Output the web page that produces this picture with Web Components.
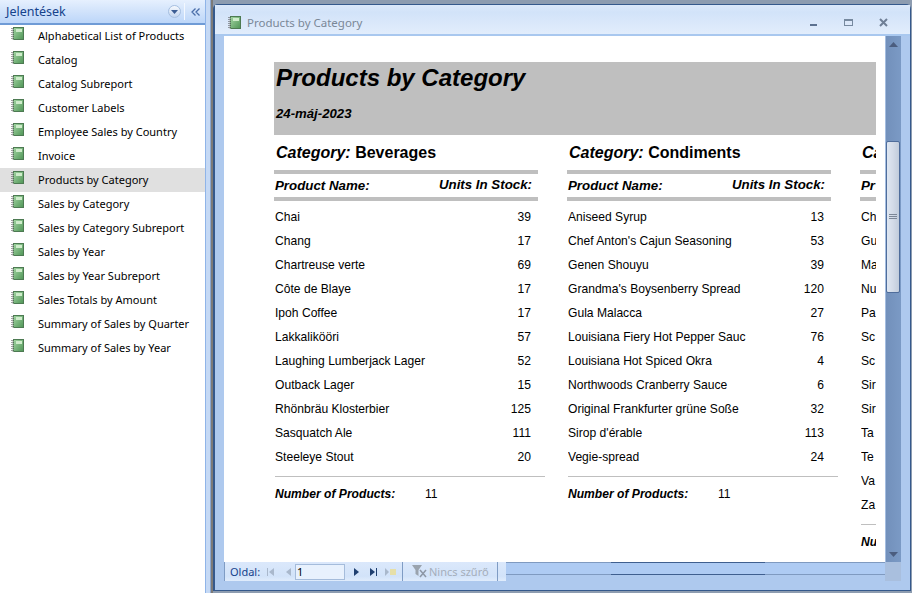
<!DOCTYPE html>
<html lang="hu">
<head>
<meta charset="utf-8">
<title>Products by Category</title>
<style>
  html, body { margin: 0; height: 100%; overflow: hidden; background: #aec9ee; }
</style>
</head>
<body>
<access-app>
  <nav-pane slot="nav" heading="Jelentések">
    <nav-item>Alphabetical List of Products</nav-item>
    <nav-item>Catalog</nav-item>
    <nav-item>Catalog Subreport</nav-item>
    <nav-item>Customer Labels</nav-item>
    <nav-item>Employee Sales by Country</nav-item>
    <nav-item>Invoice</nav-item>
    <nav-item selected>Products by Category</nav-item>
    <nav-item>Sales by Category</nav-item>
    <nav-item>Sales by Category Subreport</nav-item>
    <nav-item>Sales by Year</nav-item>
    <nav-item>Sales by Year Subreport</nav-item>
    <nav-item>Sales Totals by Amount</nav-item>
    <nav-item>Summary of Sales by Quarter</nav-item>
    <nav-item>Summary of Sales by Year</nav-item>
  </nav-pane>
  <report-window slot="main" heading="Products by Category">
    <report-banner heading="Products by Category" date="24-máj-2023"></report-banner>
    <div style="display:flex">
      <report-group label="Category:" category="Beverages" name-head="Product Name:" units-head="Units In Stock:" foot="Number of Products:" count="11">
        <report-row units="39">Chai</report-row>
        <report-row units="17">Chang</report-row>
        <report-row units="69">Chartreuse verte</report-row>
        <report-row units="17">Côte de Blaye</report-row>
        <report-row units="17">Ipoh Coffee</report-row>
        <report-row units="57">Lakkalikööri</report-row>
        <report-row units="52">Laughing Lumberjack Lager</report-row>
        <report-row units="15">Outback Lager</report-row>
        <report-row units="125">Rhönbräu Klosterbier</report-row>
        <report-row units="111">Sasquatch Ale</report-row>
        <report-row units="20">Steeleye Stout</report-row>
      </report-group>
      <report-group label="Category:" category="Condiments" name-head="Product Name:" units-head="Units In Stock:" foot="Number of Products:" count="11">
        <report-row units="13">Aniseed Syrup</report-row>
        <report-row units="53">Chef Anton's Cajun Seasoning</report-row>
        <report-row units="39">Genen Shouyu</report-row>
        <report-row units="120">Grandma's Boysenberry Spread</report-row>
        <report-row units="27">Gula Malacca</report-row>
        <report-row units="76">Louisiana Fiery Hot Pepper Sauc</report-row>
        <report-row units="4">Louisiana Hot Spiced Okra</report-row>
        <report-row units="6">Northwoods Cranberry Sauce</report-row>
        <report-row units="32">Original Frankfurter grüne Soße</report-row>
        <report-row units="113">Sirop d'érable</report-row>
        <report-row units="24">Vegie-spread</report-row>
      </report-group>
      <!-- the page cuts this column off, only its first letters are visible -->
      <report-group label="Ca" name-head="Pr" foot="Nu">
        <report-row>Ch</report-row>
        <report-row>Gu</report-row>
        <report-row>Ma</report-row>
        <report-row>Nu</report-row>
        <report-row>Pa</report-row>
        <report-row>Sc</report-row>
        <report-row>Sc</report-row>
        <report-row>Sir</report-row>
        <report-row>Sir</report-row>
        <report-row>Ta</report-row>
        <report-row>Te</report-row>
        <report-row>Va</report-row>
        <report-row>Za</report-row>
      </report-group>
    </div>
  </report-window>
</access-app>

<script>
(function () {
  // small green report book, used in the nav list and on the window title
  var bookIcon = `
    <svg width="14" height="14" viewBox="0 0 14 14" xmlns="http://www.w3.org/2000/svg">
      <defs><linearGradient id="b" x1="0" y1="0" x2="1" y2="1">
        <stop offset="0" stop-color="#a3d6a3"/><stop offset="1" stop-color="#4f9456"/>
      </linearGradient></defs>
      <rect x="2.500" y="0.500" width="10" height="12" fill="url(#b)" stroke="#4d7a52"/>
      <rect x="5" y="2" width="6" height="3" fill="#cfeccb"/>
      <path d="M1 1V13" stroke="#444" stroke-width="1" stroke-dasharray="1 1"/>
      <path d="M2 2V13" stroke="#bbb" stroke-width="1" stroke-dasharray="1 1"/>
    </svg>`;

  class AccessApp extends HTMLElement {
    constructor() {
      super();
      this.attachShadow({ mode: 'open' });
      this.shadowRoot.innerHTML = `
        <style>
          :host { display: flex; width: 912px; height: 593px; overflow: hidden; }
          .nav { display: block; width: 205px; flex: none; }
          .split { width: 8px; flex: none;
            background: linear-gradient(90deg, #8fb4e8 0 1px, #c5d9f5 1px 5px, #8aa6cf 5px 6px, #7c7a78 6px 8px); }
          .main { display: block; flex: 1; min-width: 0; }
        </style>
        <div class="nav"><slot name="nav"></slot></div>
        <div class="split"></div>
        <div class="main"><slot name="main"></slot></div>
      `;
    }
  }

  class NavPane extends HTMLElement {
    constructor() {
      super();
      this.attachShadow({ mode: 'open' });
      this.shadowRoot.innerHTML = `
        <style>
          :host { display: block; height: 593px; background: #fff; }
          .head { display: flex; align-items: center; height: 25px; box-sizing: border-box;
            border-bottom: 2px solid #6f9bd6;
            background: linear-gradient(#e6f0fe, #d3e4fb 45%, #bcd6f9); }
          h1 { flex: 1; margin: 0; padding-left: 6px; font: 400 12.5px "Noto Sans", "DejaVu Sans", sans-serif; color: #15428b; }
          .drop { width: 11px; height: 11px; margin-right: 3px; border-radius: 50%; display: flex;
            align-items: center; justify-content: center; border: 1px solid #a6bfe0;
            background: linear-gradient(#f6f9fe, #c3d5ef); }
          .sep { width: 1px; height: 17px; background: #f3f8ff; margin-right: 6px; }
          .head > svg { margin-right: 5px; }
        </style>
        <div class="head">
          <h1 part="title"></h1>
          <span class="drop"><svg width="7" height="4" viewBox="0 0 7 4"><path d="M0 0H7L3.500 4Z" fill="#3c5d94"/></svg></span>
          <span class="sep"></span>
          <svg width="9" height="8" viewBox="0 0 9 8" fill="none" stroke="#4a6ea9" stroke-width="1.300"><path d="M4.500 0.500L1 4L4.500 7.500M8.500 0.500L5 4L8.500 7.500"/></svg>
        </div>
        <slot></slot>
      `;
      this.shadowRoot.querySelector('h1').textContent = this.getAttribute('heading');
    }
  }

  class NavItem extends HTMLElement {
    constructor() {
      super();
      this.attachShadow({ mode: 'open' });
      this.shadowRoot.innerHTML = `
        <style>
          :host { display: flex; height: 24px; box-sizing: border-box; padding: 0 0 2px 11px; margin-top: -1px; margin-bottom: 1px; align-items: center;
            font: 400 11px "Noto Sans", sans-serif; color: #000; white-space: nowrap; }
          :host([selected]) { background: #e0e0e0; }
          svg { flex: none; margin-right: 13px; margin-top: -2px; }
        </style>
        ${bookIcon}
        <slot></slot>
      `;
    }
  }

  class ReportWindow extends HTMLElement {
    constructor() {
      super();
      this.attachShadow({ mode: 'open' });
      this.shadowRoot.innerHTML = `
        <style>
          :host { display: flex; flex-direction: column; height: 593px; box-sizing: border-box;
            padding: 4px 1px 2px 0; background: #8d9cb0; }
          .frame { flex: 1; display: flex; flex-direction: column; min-height: 0; box-sizing: border-box;
            background: #aec9ee; border: 1px solid #35598c; border-left-width: 2px; border-radius: 5px 5px 0 0; }
          .title { display: flex; align-items: center; flex: none; height: 31px; box-sizing: border-box;
            padding: 7px 0 0 13px; border-bottom: 2px solid #a9c8ef;
            background: linear-gradient(#dbe8fa, #d2e3f9 25%, #e2edfc);
            font: 400 11.500px "Noto Sans", sans-serif; color: #7a8797; }
          .title svg.b { margin-right: 5px; }
          .name { margin-top: -2px; }
          .caption { flex: none; margin-left: auto; display: flex; align-items: center; gap: 25px; padding-right: 21px; }
          .body { flex: 1; display: flex; min-height: 0; padding: 0 9px 9px 9px; }
          .stack { flex: 1; min-width: 0; display: flex; flex-direction: column; }
          .sheet { flex: 1; min-height: 0; overflow: hidden; background: #fff; box-sizing: border-box; padding: 26px 9px 0 50px; }
          .clip { overflow: hidden; height: 100%; }
          .bottom { flex: none; display: flex; height: 19px; }
          .hbar { flex: 1; display: block; box-sizing: border-box; height: 13px;
            border-top: 1px solid #7f9ac0; border-bottom: 1px solid #7f9ac0; background: #aecbf3; }
          .hthumb { display: block; width: 154px; height: 100%; margin-left: 105px; margin-top: -1px;
            border-top: 1px solid #3f5f8f; border-bottom: 1px solid #3f5f8f; background: #aecbf3; }
          .vcol { flex: none; width: 16px; display: flex; flex-direction: column; }
          .vbar { flex: 1; min-height: 0; display: flex; flex-direction: column; box-sizing: border-box;
            border-left: 1px solid #a4bde0; background: linear-gradient(90deg, #7290bb, #7b9ac5); }
          .arrow { flex: none; height: 16px; display: flex; align-items: center; justify-content: center; }
          .gap { flex: none; height: 89px; }
          .thumb { flex: none; height: 152px; box-sizing: border-box; margin-right: 1px; border: 1px solid #4f6d9b; border-radius: 2px;
            background: linear-gradient(90deg, #dfe7f2, #d3dbe8 50%, #c1ccdb); display: flex; align-items: center; justify-content: center; }
          .corner { flex: none; height: 19px; background: #a9bfde; }
        </style>
        <div class="frame">
          <div class="title">
            <span style="display:flex">${bookIcon.replace('<svg', '<svg class="b"')}</span>
            <span class="name"></span>
            <span class="caption">
              <svg width="10" height="10" viewBox="0 0 10 10"><rect x="1" y="6" width="7" height="2" fill="#5c7190"/></svg>
              <svg width="10" height="10" viewBox="0 0 10 10"><rect x="0.500" y="1.500" width="8" height="6" fill="#dce8fa" stroke="#76899f"/><rect x="0" y="1" width="9" height="2" fill="#76899f"/></svg>
              <svg width="10" height="10" viewBox="0 0 10 10" fill="none" stroke="#6f7f96" stroke-width="2"><path d="M1 1L8 8M8 1L1 8"/></svg>
            </span>
          </div>
          <div class="body">
            <div class="stack">
              <div class="sheet"><div class="clip"><slot></slot></div></div>
              <div class="bottom">
                <record-nav page="1"></record-nav>
                <span class="hbar"><span class="hthumb"></span></span>
              </div>
            </div>
            <div class="vcol">
              <div class="vbar">
                <div class="arrow"><svg width="9" height="5" viewBox="0 0 9 5"><path d="M0 5H9L4.500 0Z" fill="#4b5d7f"/></svg></div>
                <div class="gap"></div>
                <div class="thumb"><svg width="8" height="6" viewBox="0 0 8 6" stroke="#7c8797"><path d="M0 0.500H8M0 2.500H8M0 4.500H8"/></svg></div>
                <div style="flex:1"></div>
                <div class="arrow"><svg width="9" height="5" viewBox="0 0 9 5"><path d="M0 0H9L4.500 5Z" fill="#4b5d7f"/></svg></div>
              </div>
              <div class="corner"></div>
            </div>
          </div>
        </div>
      `;
      this.shadowRoot.querySelector('.name').textContent = this.getAttribute('heading');
    }
  }

  class RecordNav extends HTMLElement {
    constructor() {
      super();
      this.attachShadow({ mode: 'open' });
      this.shadowRoot.innerHTML = `
        <style>
          :host { display: flex; align-items: center; flex: none; width: 282px; height: 19px; box-sizing: border-box;
            border-left: 1px solid #7f9cc4; background: linear-gradient(#dbe8fb, #d2e3f9 75%, #e0ecfc);
            padding-left: 5px; font: 400 11px "Noto Sans", sans-serif; color: #15428b; white-space: nowrap; }
          svg { flex: none; }
          .lbl { width: 37px; flex: none; }
          .pg { flex: none; width: 50px; height: 16px; box-sizing: border-box; border: 1px solid #a5bcdb; background: #e8f1fd;
            color: #000; padding-left: 1px; line-height: 14px; margin: 0 9px 0 4px; }
          .sep { width: 1px; height: 19px; background: #7f9cc4; flex: none; }
          .off { flex: none; width: 59px; color: #a5aebb; margin: 0 9px 0 2px; }
        </style>
        <span class="lbl">Oldal:</span>
        <svg width="8" height="8" viewBox="0 0 8 8" fill="#a9b8cc" style="margin-right:11px"><rect x="0" width="1" height="8"/><path d="M7 0V8L2 4Z"/></svg>
        <svg width="5" height="8" viewBox="0 0 5 8" fill="#a9b8cc"><path d="M5 0V8L0 4Z"/></svg>
        <span class="pg"></span>
        <svg width="5" height="8" viewBox="0 0 5 8" fill="#1f3f70" style="margin-right:11px"><path d="M0 0V8L5 4Z"/></svg>
        <svg width="7" height="8" viewBox="0 0 7 8" fill="#1f3f70" style="margin-right:8px"><path d="M0 0V8L5 4Z"/><rect x="6" width="1" height="8"/></svg>
        <svg width="11" height="8" viewBox="0 0 11 8" style="margin-right:6px"><path d="M0 0V8L4 4Z" fill="#a9b8cc"/><rect x="5" y="1" width="6" height="6" fill="#e6dfa8"/></svg>
        <span class="sep"></span>
        <svg width="15" height="13" viewBox="0 0 15 13" style="margin-left:9px" fill="#9aa3ae"><path d="M0 0H10L6.500 5V11L3.500 9V5Z"/><path d="M8 5L14 12M14 5L8 12" stroke="#8d97a5" stroke-width="1.500" fill="none"/></svg>
        <span class="off">Nincs szűrő</span>
        <span class="sep"></span>
      `;
      this.shadowRoot.querySelector('.pg').textContent = this.getAttribute('page');
    }
  }

  class ReportBanner extends HTMLElement {
    constructor() {
      super();
      this.attachShadow({ mode: 'open' });
      this.shadowRoot.innerHTML = `
        <style>
          :host { display: block; box-sizing: border-box; height: 73px; background: #bfbfbf; padding: 1px 0 0 2px;
            font-family: "Liberation Sans", Arial, sans-serif; font-style: italic; font-weight: 700; color: #000; }
          .t { font-size: 24px; line-height: 30px; }
          .d { font-size: 13.200px; line-height: 14px; margin-top: 14px; }
        </style>
        <div class="t"></div>
        <div class="d"></div>
      `;
      this.shadowRoot.querySelector('.t').textContent = this.getAttribute('heading');
      this.shadowRoot.querySelector('.d').textContent = this.getAttribute('date');
    }
  }

  class ReportGroup extends HTMLElement {
    constructor() {
      super();
      this.attachShadow({ mode: 'open' });
      this.shadowRoot.innerHTML = `
        <style>
          :host { display: block; flex: none; width: 293px; box-sizing: border-box;
            font-family: "Liberation Sans", Arial, sans-serif; font-size: 12.100px; color: #000; }
          .cat { height: 35px; padding: 9px 0 0 2px; box-sizing: border-box; font-size: 16px; line-height: 18px; font-weight: 700; white-space: nowrap; }
          .head { width: 264px; height: 31px; box-sizing: border-box; border-top: 4px solid #bfbfbf; border-bottom: 4px solid #bfbfbf;
            display: flex; justify-content: space-between; align-items: center; padding: 0 6px 0 1px;
            font-style: italic; font-weight: 700; font-size: 13.300px; white-space: nowrap; }
          .head span:last-child { margin-top: -2px; }
          .rows { padding-top: 4px; padding-bottom: 7px; }
          .foot { margin-left: 1px; width: 270px; border-top: 1px solid #bfbfbf; padding-top: 10px;
            display: flex; font-weight: 700; font-style: italic; line-height: 14px; white-space: nowrap; }
          .foot b { width: 150px; flex: none; }
          .foot span { font-style: normal; font-weight: 400; }
        </style>
        <div class="cat"><i class="l"></i> <span class="c"></span></div>
        <div class="head"><span class="nh"></span><span class="uh"></span></div>
        <div class="rows"><slot></slot></div>
        <div class="foot"><b class="f"></b><span class="n"></span></div>
      `;
      var fill = { '.l': 'label', '.c': 'category', '.nh': 'name-head', '.uh': 'units-head', '.f': 'foot', '.n': 'count' };
      for (var sel in fill) {
        this.shadowRoot.querySelector(sel).textContent = this.getAttribute(fill[sel]) || '';
      }
    }
  }

  class ReportRow extends HTMLElement {
    constructor() {
      super();
      this.attachShadow({ mode: 'open' });
      this.shadowRoot.innerHTML = `
        <style>
          :host { display: flex; width: 257px; height: 24px; align-items: center; justify-content: space-between;
            padding-left: 1px; white-space: nowrap; box-sizing: border-box; }
          .name { display: block; width: 190px; overflow: hidden; }
        </style>
        <span class="name"><slot></slot></span>
        <span class="u"></span>
      `;
      this.shadowRoot.querySelector('.u').textContent = this.getAttribute('units') || '';
    }
  }

  customElements.define('access-app', AccessApp);
  customElements.define('nav-pane', NavPane);
  customElements.define('nav-item', NavItem);
  customElements.define('report-window', ReportWindow);
  customElements.define('record-nav', RecordNav);
  customElements.define('report-banner', ReportBanner);
  customElements.define('report-group', ReportGroup);
  customElements.define('report-row', ReportRow);
})();
</script>
</body>
</html>
